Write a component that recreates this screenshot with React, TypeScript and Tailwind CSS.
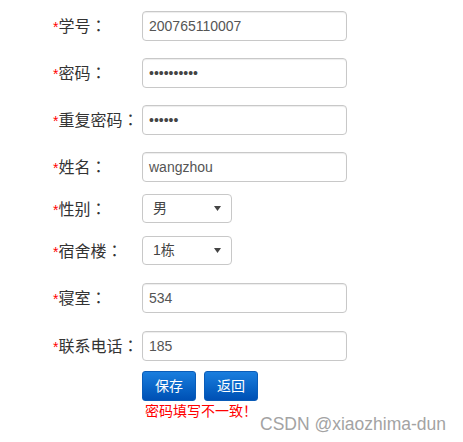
import React from 'react';

const labelFont = { fontFamily: '"Liberation Sans", "Noto Sans CJK SC", sans-serif' };
const colonFont = { fontFamily: '"Noto Sans CJK TC", sans-serif' };

type Field = {
  label: string;
  kind: 'text' | 'password' | 'select';
  value: string;
  gap: string;
};

const fields: Field[] = [
  { label: '学号', kind: 'text', value: '200765110007', gap: 'mt-0' },
  { label: '密码', kind: 'password', value: '••••••••••', gap: 'mt-[17px]' },
  { label: '重复密码', kind: 'password', value: '••••••', gap: 'mt-[17px]' },
  { label: '姓名', kind: 'text', value: 'wangzhou', gap: 'mt-[17px]' },
  { label: '性别', kind: 'select', value: '男', gap: 'mt-[12px]' },
  { label: '宿舍楼', kind: 'select', value: '1栋', gap: 'mt-[13px]' },
  { label: '寝室', kind: 'text', value: '534', gap: 'mt-[18px]' },
  { label: '联系电话', kind: 'text', value: '185', gap: 'mt-[18px]' },
];

const Control: React.FC<{ f: Field }> = ({ f }) => {
  if (f.kind === 'select') {
    return (
      <div className="flex items-center justify-between w-[90px] h-[29px] border border-[#c8c8c8] rounded-[4px] bg-white pl-[10px] pr-[10px] text-[14px] text-[#444]">
        <span>{f.value}</span>
        <svg width="7" height="5" viewBox="0 0 7 5"><path d="M0 0h7L3.5 5z" fill="#444" /></svg>
      </div>
    );
  }
  return (
    <div className="flex items-center w-[205px] h-[30px] border border-[#c8c8c8] rounded-[4px] bg-white pl-[6px] shadow-[inset_0_1px_1px_rgba(0,0,0,0.075)] text-[14px] text-[#555]">
      <span className={f.kind === 'password' ? 'text-[#444]' : ''}>{f.value}</span>
    </div>
  );
};

const App: React.FC = () => {
  return (
    <div className="relative w-[463px] h-[442px] bg-white overflow-hidden" style={labelFont}>
      <div className="pl-[53px] pt-[11px]">
        {fields.map((f) => (
          <div key={f.label} className={`flex items-center ${f.gap}`}>
            <div className="w-[89px] shrink-0 text-[16px] text-[#333] leading-none whitespace-nowrap">
              <span className="text-[#f00] text-[14px]">*</span>
              {f.label}
              <span style={colonFont}>：</span>
            </div>
            <Control f={f} />
          </div>
        ))}

        <div className="flex gap-[8px] mt-[10px] ml-[89px]">
          <button className="w-[54px] h-[30px] rounded-[3px] bg-gradient-to-b from-[#1a7ede] to-[#0050b4] border border-[#0a5cb8] text-white text-[14px]">保存</button>
          <button className="w-[54px] h-[30px] rounded-[3px] bg-gradient-to-b from-[#1a7ede] to-[#0050b4] border border-[#0a5cb8] text-white text-[14px]">返回</button>
        </div>
        <div className="ml-[92px] mt-[1px] text-[14px] leading-[18px] text-[#f00]">密码填写不一致！</div>
      </div>

      <div className="absolute left-[260px] top-[414px] text-[17.5px] leading-[20px] text-[#a3a3a3] whitespace-nowrap">
        CSDN @xiaozhima-dun
      </div>
    </div>
  );
};

export default App;
